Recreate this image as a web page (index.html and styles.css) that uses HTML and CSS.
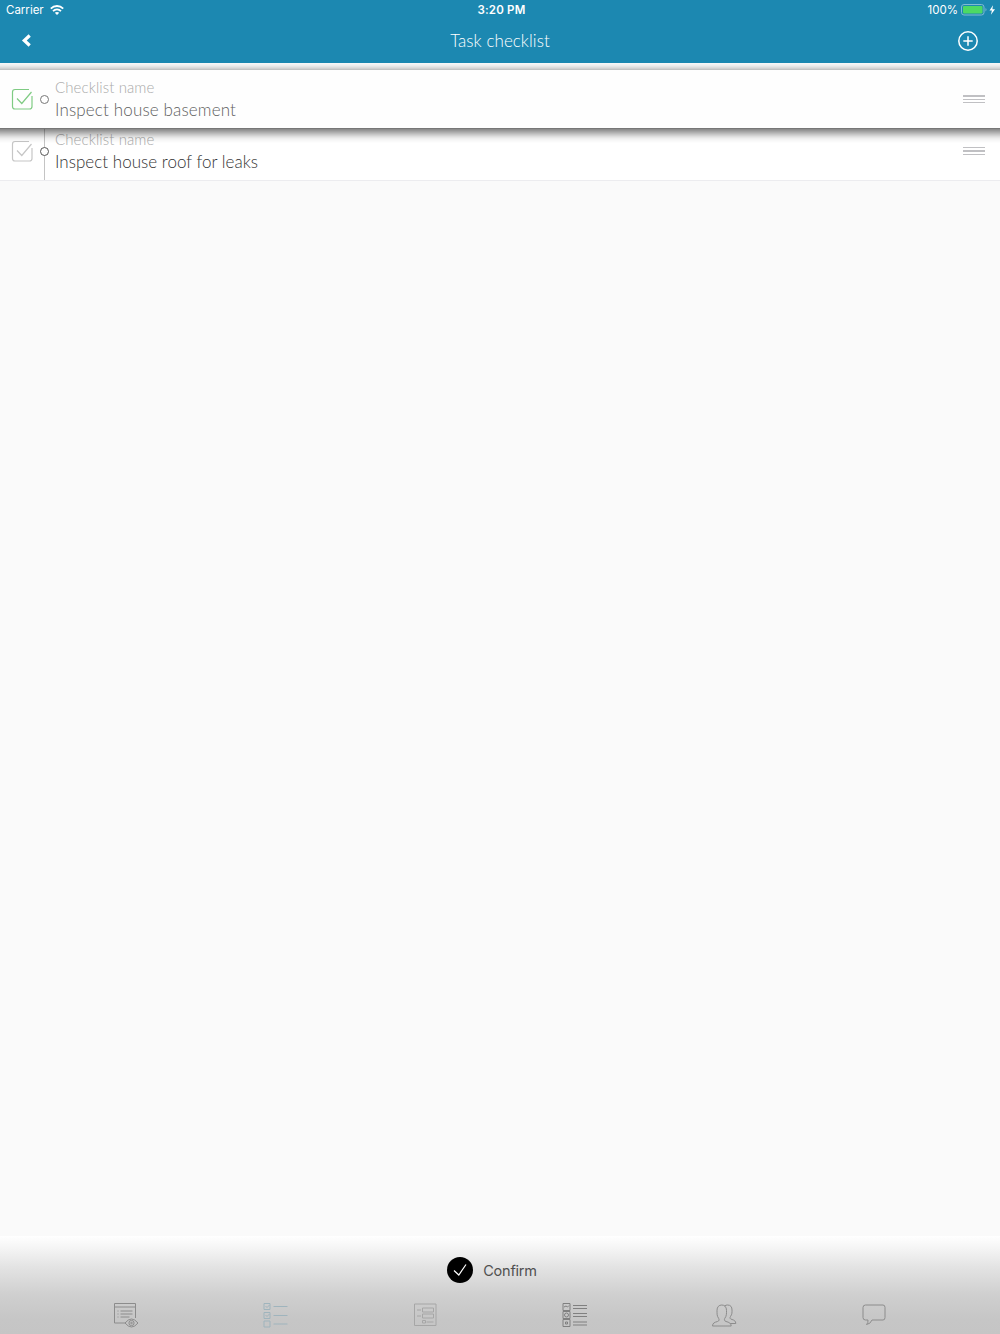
FILE: index.html
```
<!DOCTYPE html>
<html lang="en">
<head>
    <meta charset="UTF-8">
    <meta name="viewport" content="width=device-width, initial-scale=1.0">
    <title>Task checklist</title>
    <link rel="stylesheet" href="styles.css">
</head>

<body>
    <header class="header">
        <div class="status">
            <div class="status-left">
                <span class="carrier">Carrier</span>
                <svg class="wifi" width="14" height="10" viewBox="0 0 14 10" fill="none" stroke="#fff" stroke-width="1.8">
                    <path d="M.8 3.7C4.3.1 9.7.1 13.2 3.7M3 6.1c2.3-2.2 5.7-2.2 8 0"/>
                    <path d="M4.8 7.8Q7 6 9.2 7.8L7 10z" fill="#fff" stroke="none"/>
                </svg>
            </div>
            <div class="time">3:20 PM</div>
            <div class="status-right">
                <span class="percent">100%</span>
                <svg width="34" height="12" viewBox="0 0 34 12">
                    <rect x=".5" y=".5" width="22.5" height="10.5" rx="2.5" fill="none" stroke="#80bbd2"/>
                    <rect x="2" y="2" width="19.5" height="7.5" rx="1" fill="#4cd964"/>
                    <path d="M24.500 4q2 1.700 0 3.500z" fill="#80bbd2"/>
                    <path d="M32 1.200L28.500 6.400h2.400l-1 4.300 4.100-5.400h-2.600z" fill="#fff"/>
                </svg>
            </div>
        </div>
        <div class="navbar">
            <svg class="back" width="10" height="14" viewBox="0 0 10 14" fill="none" stroke="#fff" stroke-width="3.2">
                <path d="M8.700 1.500L3.300 6.500l5.400 5"/>
            </svg>
            <h1 class="title">Task checklist</h1>
            <svg class="add" width="22" height="22" viewBox="0 0 22 22" fill="none" stroke="#fff" stroke-width="1.5">
                <circle cx="11" cy="11" r="9.2"/>
                <path d="M6.3 11h9.4M11 6.3v9.4"/>
            </svg>
        </div>
    </header>

    <main class="list">
        <div class="row dragging">
            <svg class="check" width="22" height="22" viewBox="0 0 22 22">
                <path d="M18 1.500H4Q1.500 1.500 1.500 4v14.500Q1.500 21 4 21h14.500q2.500 0 2.500-2.500V8M6 10.500l4.800 5L20.500 4"/>
            </svg>
            <div class="step"><span class="dot"></span></div>
            <div class="text">
                <div class="label">Checklist name</div>
                <div class="name">Inspect house basement</div>
            </div>
            <div class="handle"></div>
        </div>
        <div class="row">
            <svg class="check" width="22" height="22" viewBox="0 0 22 22">
                <path d="M18 1.500H4Q1.500 1.500 1.500 4v14.500Q1.500 21 4 21h14.500q2.500 0 2.500-2.500V8M6 10.500l4.800 5L20.500 4"/>
            </svg>
            <div class="step"><span class="dot"></span></div>
            <div class="text">
                <div class="label">Checklist name</div>
                <div class="name name-tight">Inspect house roof for leaks</div>
            </div>
            <div class="handle"></div>
        </div>
    </main>

    <footer class="footer">
        <div class="confirm">
            <svg width="26" height="26" viewBox="0 0 26 26" fill="none">
                <circle cx="13" cy="13" r="13" fill="#000"/>
                <path d="M7 13.500l4.800 4.500L19 7.500" stroke="#fff" stroke-width="1.200"/>
            </svg>
            <span class="confirm-text">Confirm</span>
        </div>
        <nav class="tabs">
            <!-- overview -->
            <svg class="tab dark" viewBox="0 0 26 26">
                <path d="M13 22H2.500V2.500h21V17M2.500 6h21M5.500 10h1M5.500 13h1M5.500 16h1M8.500 10h12M8.500 13h12M8.500 16h9"/>
                <path d="M13 22q6.500-8 13 0q-6.500 8-13 0z"/>
                <circle cx="19.500" cy="22" r="2.600"/>
                <circle cx="19.500" cy="22" r=".8"/>
            </svg>
            <!-- checklist -->
            <svg class="tab active" viewBox="0 0 26 26">
                <path d="M2 2.500h6v6H2zM2 11.500h6v6H2zM2 20h6v6H2z"/>
                <path d="M3.500 5l1.500 1.500L7.500 4M3.500 14l1.500 1.500L7.500 13M11.500 5.500h14M11.500 14.500h14M11.500 23h14"/>
            </svg>
            <!-- form -->
            <svg class="tab faint" viewBox="0 0 26 26">
                <path d="M2.500 3h21.500v21.500H2.500zM5 9h4M5 15h4M10.500 7h11v4h-11zM10.500 13h11v4h-11zM10.500 19.500h3v2.500h-3zM14.500 21h7"/>
            </svg>
            <!-- survey -->
            <svg class="tab survey" viewBox="0 0 26 26">
                <path d="M1 2.500h7v7H1zM1 10.500h7v7H1zM1 18.500h7v7H1z"/>
                <path d="M2 6l2-1 1.500 1L7 4.500M3.500 21h2v2h-2z"/>
                <circle cx="4.500" cy="14" r="2"/>
                <path d="M11 4.500h14M11 7.500h14M11 12.500h14M11 15.500h14M11 21h14M11 24h14"/>
            </svg>
            <!-- people -->
            <svg class="tab dark" viewBox="0 0 26 26">
                <path d="M.5 25c.2-3 1.800-3.600 5-4.500 2-.6 1.700-2 1.200-3C4.500 14.500 5.200 12 5 9.500 5 5.800 7 4 9.800 4s4.700 1.800 4.700 5.500c0 3 .2 5.500-1.800 8-.5 1-.5 2.400 1.300 3 3.200.9 5 1.500 5.200 4.500z"/>
                <path d="M12.500 5c1-.8 2-1 3.200-1 3 0 4.300 2 4.300 5 0 2.500.2 4-1.500 6.500-1 1.500-.5 2.500 1.500 3 2.200.6 3.700 1.500 3.800 4h-5.500"/>
            </svg>
            <!-- comments -->
            <svg class="tab dark" viewBox="0 0 26 26">
                <path d="M3.500 4h17.500q2 0 2 2.500v10q0 2.500-2 2.500H10Q8.500 23 4.500 23.500q1.800-1.500 1.500-4.500H3.500Q1 19 1 16.500V6.500Q1 4 3.500 4z"/>
            </svg>
        </nav>
    </footer>
</body>
</html>
```
FILE: styles.css
```
* {
    box-sizing: border-box;
    margin: 0;
    padding: 0;
}

body {
    display: flex;
    flex-direction: column;
    height: 1334px;
    background: #fafafa;
    font-family: Lato, sans-serif;
    overflow: hidden;
}

svg {
    display: block;
    flex: none;
}

.header {
    height: 63px;
    background: #1c88b1;
    color: #fff;
}

.status {
    display: grid;
    grid-template-columns: 1fr auto 1fr;
    align-items: center;
    height: 20px;
    padding: 0 6px;
    font-family: Inter, sans-serif;
    font-size: 11.5px;
}

.status-left,
.status-right {
    display: flex;
    align-items: center;
}

.status-left {
    gap: 6px;
}

.time {
    padding-left: 3px;
    font-weight: 600;
    letter-spacing: 0.2px;
}

.status-right {
    justify-content: flex-end;
    gap: 3px;
    margin-right: -1px;
}

.navbar {
    display: flex;
    align-items: center;
    justify-content: space-between;
    height: 42px;
    padding: 0 21px;
}

.back {
    margin-bottom: 1px;
}

.title {
    padding: 0 0 1px 12px;
    font-size: 17px;
    font-weight: 300;
    letter-spacing: 0.05px;
}

.list {
    height: 118px;
    padding-top: 6px;
    background: #fff;
    border-bottom: 1px solid #ececef;
}

.row {
    display: flex;
    align-items: center;
    height: 58px;
    padding: 0 15px 0 11px;
    background: #fff;
}

/* lifted row, overlaps the one below it */
.dragging {
    position: relative;
    z-index: 1;
    height: 60px;
    margin: 0 -20px -7px;
    padding: 0 35px 0 31px;
    background: #fefefe;
    border-top: 1px solid #c4c4c4;
    border-bottom: 1px solid #777;
    box-shadow: 0 3px 9px 1px rgba(0, 0, 0, 0.58);
    clip-path: inset(-6px 0 -14px 0);
}

.check {
    fill: none;
    stroke: #c6c6c6;
    stroke-width: 1.2;
}

.dragging .check {
    stroke: #7fcb83;
}

.step {
    display: flex;
    align-items: center;
    justify-content: center;
    width: 9px;
    height: 100%;
    margin: 0 6px 0 7px;
    background: linear-gradient(#c4c4c4, #c4c4c4) center / 1px 100% no-repeat;
}

.dragging .step {
    background: none;
}

.dot {
    width: 9px;
    height: 9px;
    border: 1.5px solid #555;
    border-radius: 50%;
    background: #fff;
}

.dragging .dot {
    border-color: #777;
}

.text {
    flex: 1;
    padding-top: 1px;
}

.label {
    height: 22px;
    color: #aaa;
    font-size: 15px;
    font-weight: 300;
    line-height: 20px;
    letter-spacing: 0.1px;
}

.name {
    color: #333;
    font-size: 17px;
    font-weight: 300;
    line-height: 21px;
    padding-bottom: 2px;
    letter-spacing: 0.15px;
}

.name-tight {
    letter-spacing: 0.03px;
}

.dragging .name {
    color: #606060;
}

.handle {
    width: 22px;
    height: 9px;
    background: repeating-linear-gradient(#c0c0c3 0 1.5px, #fff 1.5px 3.5px);
}

.footer {
    height: 98px;
    margin-top: auto;
    padding-top: 21px;
    background: linear-gradient(#fff 0%, #f4f4f4 13%, #e3e3e3 32%, #cfcfcf 60%, #c6c6c6 85%, #c5c5c5 100%);
}

.confirm {
    display: flex;
    align-items: center;
    justify-content: center;
    gap: 10px;
    height: 26px;
    padding-right: 16px;
}

.confirm-text {
    color: #505050;
    font-family: Inter, sans-serif;
    font-size: 14.5px;
    letter-spacing: -0.2px;
}

.tabs {
    display: flex;
    justify-content: space-around;
    margin-top: 18px;
    padding: 0 50px;
}

.tab {
    width: 26px;
    height: 26px;
    fill: none;
    stroke: #999;
    stroke-width: 1;
    overflow: visible;
}

.tab.active {
    stroke: #9fb4bd;
}

.tab.faint {
    stroke: #a6a6a6;
}

.tab.dark {
    stroke: #8c8c8c;
}

.tab.survey {
    stroke: #808080;
}
```
